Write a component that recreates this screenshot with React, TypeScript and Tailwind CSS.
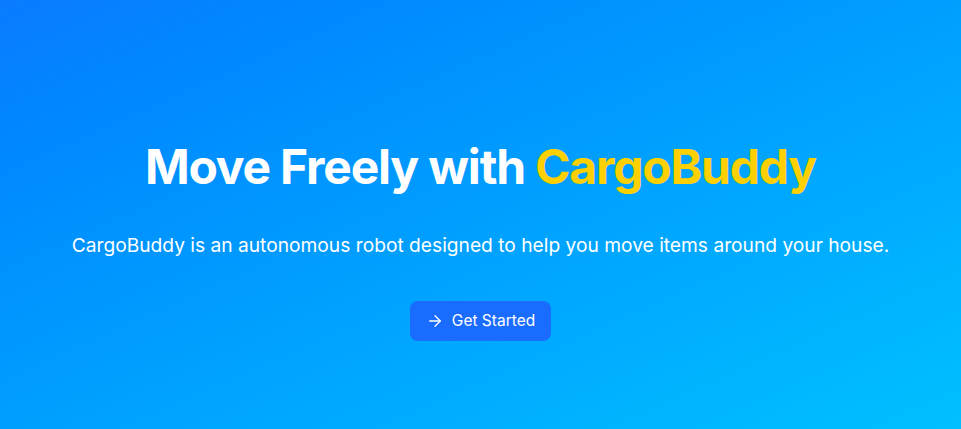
import { ArrowRight } from 'lucide-react';

export default function App() {
  return (
    <div
      className="min-h-screen flex flex-col items-center justify-center bg-gradient-to-br from-[#0a7bff] to-[#00c0ff] pt-[56px] text-white text-center"
      style={{ fontFamily: 'Inter, "Noto Sans", sans-serif' }}
    >
      <h1 className="text-5xl font-bold leading-none tracking-tight">
        Move Freely with <span className="text-[#ffd000]">CargoBuddy</span>
      </h1>
      <p className="mt-10 text-[19.2px] leading-7">
        CargoBuddy is an autonomous robot designed to help you move items around your house.
      </p>
      <button className="mt-[42px] mb-[2px] flex items-center gap-2 rounded-lg bg-[#1a6cff] px-4 py-2 text-[15.5px] leading-6 text-white">
        <ArrowRight className="w-[18px] h-[18px]" strokeWidth={1.75} />
        Get Started
      </button>
    </div>
  );
}
